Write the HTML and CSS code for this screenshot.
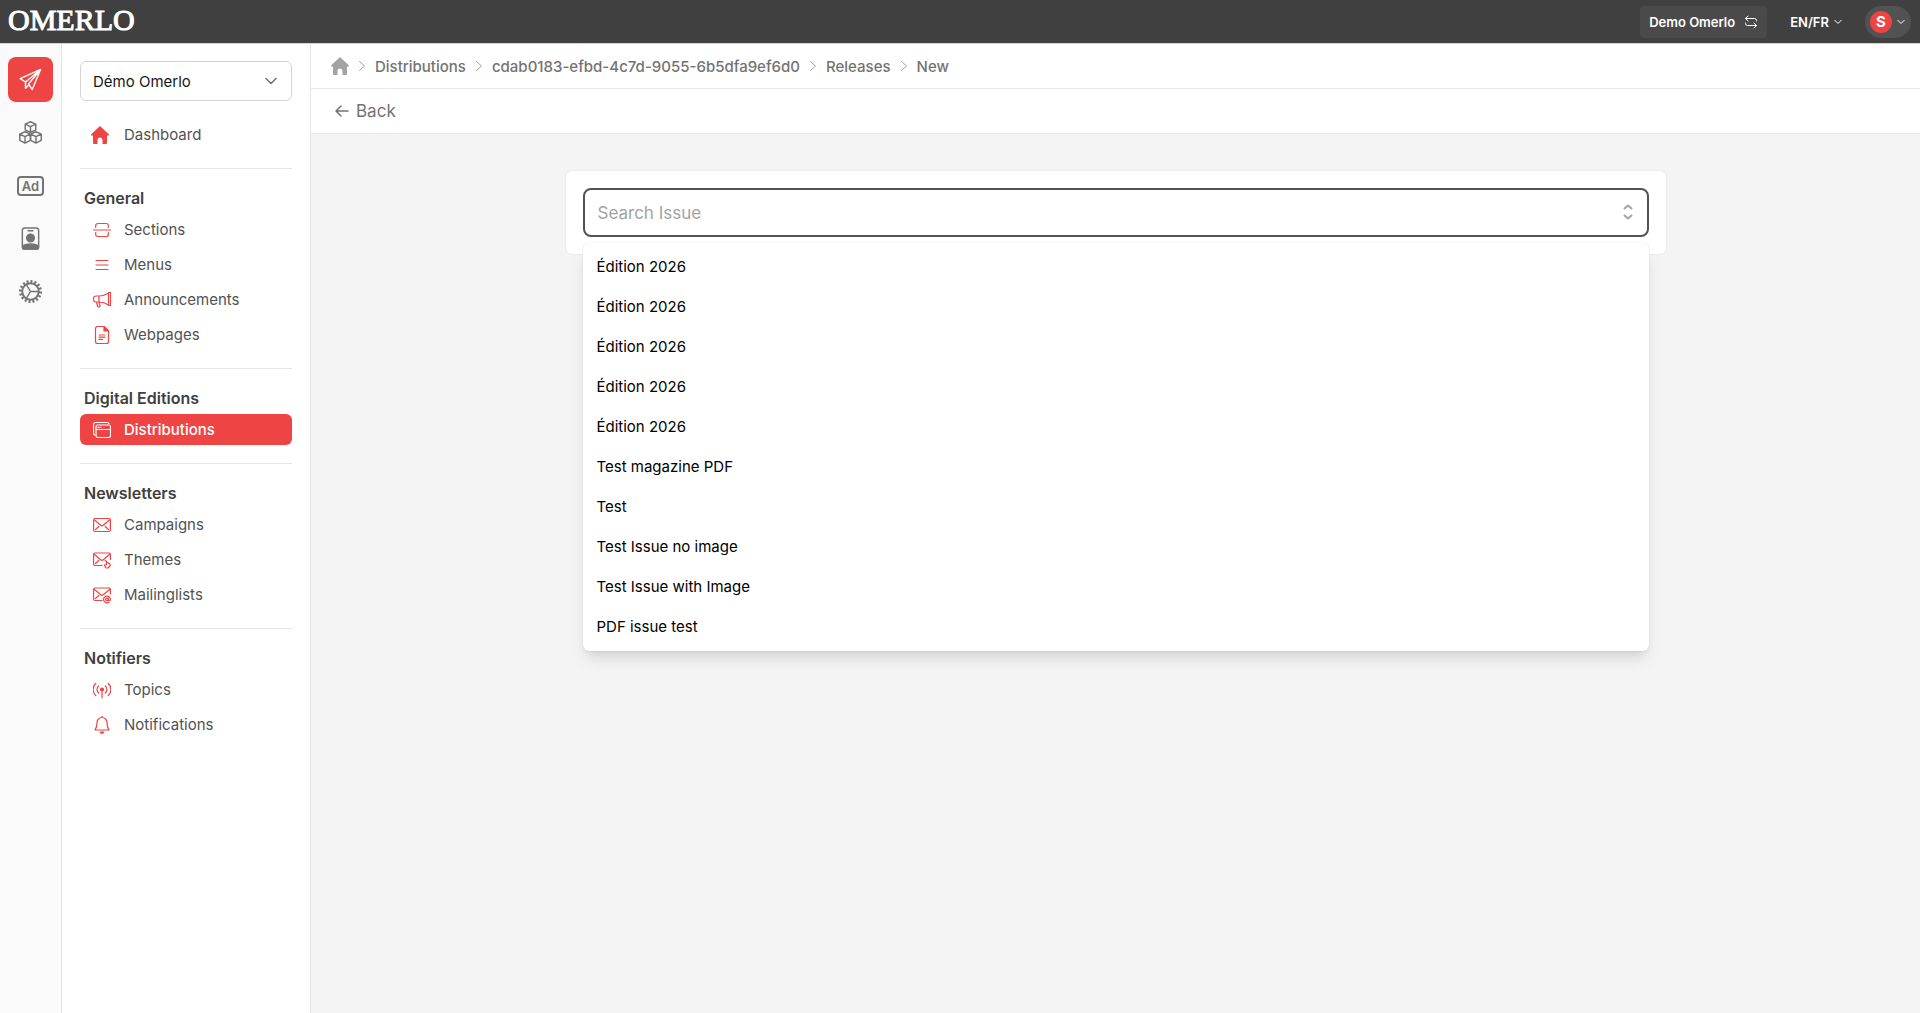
FILE: index.html
```html
<!DOCTYPE html>
<html lang="en">
<head>
    <meta charset="UTF-8">
    <meta name="viewport" content="width=device-width, initial-scale=1.0">
    <title>New release - Omerlo</title>
    <link rel="stylesheet" href="styles.css">
</head>
<body>
    <header class="topbar">
        <a href="#" class="logo">OMERLO</a>
        <div class="topbar-actions">
            <button type="button" class="org-switch">
                Demo Omerlo
                <svg class="icon-swap" viewBox="0 0 14 14"><path d="M4 1 1.500 3.500 4 6M1.500 3.500h9a2 2 0 0 1 2 2v.5M10 8l2.500 2.500L10 13M12.500 10.500h-9a2 2 0 0 1-2-2V8"/></svg>
            </button>
            <button type="button" class="lang-switch">
                EN/FR
                <svg class="icon-caret" viewBox="0 0 8 8"><path d="M.8 2.300 4 5.500l3.200-3.200"/></svg>
            </button>
            <button type="button" class="user-menu" aria-label="User menu">
                <span class="avatar">S</span>
                <svg class="icon-caret" viewBox="0 0 8 8"><path d="M.8 2.300 4 5.500l3.200-3.200"/></svg>
            </button>
        </div>
    </header>

    <div class="layout">
        <!-- Main modules -->
        <nav class="rail" aria-label="Modules">
            <a href="#" class="rail-link active" aria-label="Publishing">
                <svg viewBox="0 0 24 24"><path d="M22.500 1.500 1.200 11l5.600 3.600zM22.500 1.500 6.800 14.600v6.600l4-4M22.500 1.500l-8.700 21-3.900-5.800z"/></svg>
            </a>
            <a href="#" class="rail-link" aria-label="Contents">
                <svg viewBox="0 0 24 24"><path d="M12 .8 17.500 3.300v5.900L12 11.800 6.500 9.200V3.300zM6.500 3.300 12 5.800l5.500-2.500M12 5.800v6M6.300 11.200l5.500 2.500v6.500l-5.500 2.900-5.500-2.900v-6.500zM.8 13.700l5.500 2.600 5.500-2.600M6.300 16.300V23M17.700 11.200l5.500 2.500v6.500l-5.500 2.900-5.500-2.900v-6.500zM12.200 13.700l5.500 2.600 5.500-2.600M17.700 16.300V23"/></svg>
            </a>
            <a href="#" class="rail-link" aria-label="Advertising">
                <span class="ad-badge">Ad</span>
            </a>
            <a href="#" class="rail-link" aria-label="Users">
                <svg viewBox="0 0 24 24"><rect x="3.500" y="1" width="17" height="22" rx="2.500"/><path d="M9.500 4h5"/><circle class="solid" cx="12" cy="11.500" r="4"/><path class="solid" d="M3.700 19.800C8 17 16 17 20.300 19.800V21a2 2 0 0 1-2 2H5.700a2 2 0 0 1-2-2z"/></svg>
            </a>
            <a href="#" class="rail-link" aria-label="Settings">
                <svg viewBox="0 0 24 24"><circle class="thick" cx="12" cy="12" r="8.600"/><circle class="teeth" cx="12" cy="12" r="10.500" pathLength="64"/><path d="m7.500 4.500 4.500 7.500-4.500 7.500M12 12h8.500"/></svg>
            </a>
        </nav>

        <aside class="sidebar">
            <select class="site-select" aria-label="Site">
                <option>Démo Omerlo</option>
            </select>

            <a href="#" class="nav-link dashboard">
                <svg viewBox="0 0 18 18"><path d="M9 0 0 8.500v1h2V17a1 1 0 0 0 1 1h3.500v-4a2.500 2.500 0 0 1 5 0v4H15a1 1 0 0 0 1-1V9.500h2v-1z"/></svg>
                Dashboard
            </a>

            <section class="nav-group">
                <h2>General</h2>
                <a href="#" class="nav-link">
                    <svg viewBox="0 0 18 18"><path d="M.5 9h17M2.700 6.400V4.500a2 2 0 0 1 2-2h8.600a2 2 0 0 1 2 2v1.900M2.700 11.500v2a2 2 0 0 0 2 2h8.600a2 2 0 0 0 2-2v-2"/></svg>
                    Sections
                </a>
                <a href="#" class="nav-link">
                    <svg viewBox="0 0 18 18"><path d="M3 4.500h12M3 9h12M3 13.500h12"/></svg>
                    Menus
                </a>
                <a href="#" class="nav-link">
                    <svg viewBox="0 0 18 18"><path d="M6 5H3a2.500 2.500 0 0 0-2.500 2.500v1A2.500 2.500 0 0 0 3 11h3c4 0 7 1.300 9.500 3V2C13 3.700 10 5 6 5zM6 5v6M15.500 1.500h2v13h-2zM3.500 11l1 4a1 1 0 0 0 1 .9h.7a.8.8 0 0 0 .8-1L6 11"/></svg>
                    Announcements
                </a>
                <a href="#" class="nav-link">
                    <svg viewBox="0 0 18 18"><path d="M11 .5H4.500a2 2 0 0 0-2 2v13a2 2 0 0 0 2 2h9a2 2 0 0 0 2-2V5zM6 9h6M6 11.200h6M6 13.400h3.500"/><path class="solid" d="M11 .5V5h4.500z"/></svg>
                    Webpages
                </a>
            </section>

            <section class="nav-group">
                <h2>Digital Editions</h2>
                <a href="#" class="nav-link active" aria-current="page">
                    <svg viewBox="0 0 18 18"><rect x="3" y="4" width="14.500" height="12.500" rx="2"/><path d="M3 8.500h14.500M1.800 14A2 2 0 0 1 .5 12.100V3.500a2 2 0 0 1 2-2h11.600A2 2 0 0 1 16 2.700M5 6.300h1M7 6.300h1"/></svg>
                    Distributions
                </a>
            </section>

            <section class="nav-group">
                <h2>Newsletters</h2>
                <a href="#" class="nav-link">
                    <svg viewBox="0 0 18 18"><rect x=".6" y="2.500" width="16.800" height="13" rx="1.500"/><path d="m1.500 4 6.200 5.200a2 2 0 0 0 2.600 0L16.500 4M2.500 13.500l3.300-3M15.500 13.500l-3.300-3"/></svg>
                    Campaigns
                </a>
                <a href="#" class="nav-link">
                    <svg viewBox="0 0 18 18"><path d="M9 14.500H2A1.500 1.500 0 0 1 .6 13V3.500A1.500 1.500 0 0 1 2 2h14a1.500 1.500 0 0 1 1.400 1.500v5M1.500 3.500l6.200 5.200a2 2 0 0 0 2.600 0l6.200-5.200M2.500 12.500l3.300-3M12.300 9.500l1.200 1v3M13.500 11l3.500 2v2l-2 2h-2l-1.800-3 1.300-.2"/></svg>
                    Themes
                </a>
                <a href="#" class="nav-link">
                    <svg viewBox="0 0 18 18"><path d="M9 14.500H2A1.500 1.500 0 0 1 .6 13V3.500A1.500 1.500 0 0 1 2 2h14a1.500 1.500 0 0 1 1.400 1.500V8M1.500 3.500l6.200 5.200a2 2 0 0 0 2.600 0l6.200-5.200M2.500 12.500l3.300-3"/><circle cx="14" cy="13.500" r="1.400"/><path d="M15.400 12.300v1.500c0 1.200 2 1.200 2-.3a3.400 3.400 0 1 0-1.700 2.900"/></svg>
                    Mailinglists
                </a>
            </section>

            <section class="nav-group">
                <h2>Notifiers</h2>
                <a href="#" class="nav-link">
                    <svg viewBox="0 0 18 18"><circle class="solid" cx="9" cy="8.500" r="1.500"/><path d="M9 9v8M5.700 12a4.500 4.500 0 0 1 0-7M12.300 12a4.500 4.500 0 0 0 0-7M2.800 14.500a8 8 0 0 1 0-12M15.200 14.500a8 8 0 0 0 0-12"/></svg>
                    Topics
                </a>
                <a href="#" class="nav-link">
                    <svg viewBox="0 0 18 18"><path d="M9 1.500A5 5 0 0 1 14 6.500c0 5 1.300 6.500 2 7.500H2c.7-1 2-2.500 2-7.500a5 5 0 0 1 5-5zM9 .3v1.200"/><path class="solid" d="M7.300 16h3.400a1.800 1.800 0 0 1-3.400 0z"/></svg>
                    Notifications
                </a>
            </section>
        </aside>

        <main class="content">
            <nav class="breadcrumb" aria-label="Breadcrumb">
                <a href="#" class="home" aria-label="Home">
                    <svg viewBox="0 0 18 18"><path d="M9 0 0 8.500v1h2V17a1 1 0 0 0 1 1h3.500v-4a2.500 2.500 0 0 1 5 0v4H15a1 1 0 0 0 1-1V9.500h2v-1z"/></svg>
                </a>
                <svg class="sep" viewBox="0 0 6 10"><path d="m.5.5 5 4.500-5 4.500"/></svg>
                <a href="#">Distributions</a>
                <svg class="sep" viewBox="0 0 6 10"><path d="m.5.5 5 4.500-5 4.500"/></svg>
                <a href="#">cdab0183-efbd-4c7d-9055-6b5dfa9ef6d0</a>
                <svg class="sep" viewBox="0 0 6 10"><path d="m.5.5 5 4.500-5 4.500"/></svg>
                <a href="#">Releases</a>
                <svg class="sep" viewBox="0 0 6 10"><path d="m.5.5 5 4.500-5 4.500"/></svg>
                <a href="#">New</a>
            </nav>
            <div class="toolbar">
                <a href="#" class="back">
                    <svg viewBox="0 0 14 12"><path d="M13 6H1M6 1 1 6l5 5"/></svg>
                    Back
                </a>
            </div>

            <div class="page">
                <div class="card">
                    <div class="combobox">
                        <input type="text" id="issue" placeholder="Search Issue" aria-label="Search Issue" role="combobox" aria-expanded="true" aria-controls="issueList" autocomplete="off">
                        <svg class="icon-sort" viewBox="0 0 10 16"><path d="m1.500 4.500 3.500-3 3.500 3M1.500 11.500l3.500 3 3.500-3"/></svg>
                        <ul class="options" id="issueList" role="listbox">
                            <li role="option">Édition 2026</li>
                            <li role="option">Édition 2026</li>
                            <li role="option">Édition 2026</li>
                            <li role="option">Édition 2026</li>
                            <li role="option">Édition 2026</li>
                            <li role="option">Test magazine PDF</li>
                            <li role="option">Test</li>
                            <li role="option">Test Issue no image</li>
                            <li role="option">Test Issue with Image</li>
                            <li role="option">PDF issue test</li>
                        </ul>
                    </div>
                </div>
            </div>
        </main>
    </div>
</body>
</html>
```

FILE: styles.css
```css
* {
    box-sizing: border-box;
}
body {
    margin: 0;
    min-height: 100vh;
    display: flex;
    flex-direction: column;
    font-family: Inter, "Liberation Sans", sans-serif;
    font-size: 16px;
    color: #525252;
    background-color: #f4f4f4;
}
a {
    color: inherit;
    text-decoration: none;
}
button, input, select {
    font-family: inherit;
}
svg {
    fill: none;
    stroke: currentColor;
    stroke-linecap: round;
    stroke-linejoin: round;
    flex-shrink: 0;
}
.solid {
    fill: currentColor;
}

/* Top bar */
.topbar {
    display: flex;
    align-items: center;
    justify-content: space-between;
    height: 44px;
    padding: 0 9px 0 8px;
    border-bottom: 1px solid #d4d4d4;
    background-color: #404040;
    color: #fff;
}
.logo {
    padding-bottom: 3px;
    font-family: "Liberation Serif", serif;
    font-size: 30px;
    line-height: 40px;
    -webkit-text-stroke: 1px #fff;
}
.topbar-actions {
    display: flex;
    align-items: center;
    gap: 23px;
}
.topbar button {
    display: flex;
    align-items: center;
    padding: 0;
    border: none;
    background: none;
    color: #fff;
    font-size: 13px;
    font-weight: 600;
    cursor: pointer;
}
.topbar .org-switch {
    height: 32px;
    gap: 9px;
    padding: 0 9px;
    border-radius: 4px;
    background-color: #4a4a4a;
}
.icon-swap {
    width: 14px;
    height: 14px;
}
.topbar .lang-switch {
    gap: 5px;
}
.icon-caret {
    width: 8px;
    height: 8px;
}
.topbar .user-menu {
    height: 32px;
    gap: 5px;
    padding: 0 6px 0 5px;
    border-radius: 16px;
    background-color: #525252;
}
.avatar {
    width: 22px;
    height: 22px;
    border-radius: 50%;
    background-color: #ef4444;
    font-size: 15px;
    line-height: 22px;
    font-weight: 700;
}

.layout {
    display: flex;
    flex: 1;
}

/* Module rail */
.rail {
    display: flex;
    flex-direction: column;
    flex-shrink: 0;
    gap: 8px;
    padding: 13px 8px;
    background-color: #fafafa;
    border-right: 1px solid #e5e5e5;
}
.rail-link {
    display: flex;
    align-items: center;
    justify-content: center;
    width: 45px;
    height: 45px;
    border-radius: 8px;
    color: #737373;
}
.rail-link svg {
    width: 23px;
    height: 23px;
    stroke-width: 1.5;
}
.rail-link.active {
    background-color: #ef4444;
    color: #fff;
}
.rail-link .thick {
    stroke-width: 2;
}
.rail-link .teeth {
    stroke-width: 3;
    stroke-linecap: butt;
    stroke-dasharray: 2 2;
}
.ad-badge {
    width: 27px;
    height: 20px;
    border: 2px solid #737373;
    border-radius: 4px;
    line-height: 16px;
    text-align: center;
    font-size: 13px;
    font-weight: 600;
}

/* Sidebar */
.sidebar {
    width: 249px;
    flex-shrink: 0;
    padding: 17px 18px;
    background-color: #fff;
    border-right: 1px solid #e5e5e5;
}
.site-select {
    display: block;
    width: 100%;
    height: 40px;
    margin-bottom: 18px;
    padding: 0 12px;
    appearance: none;
    border: 1px solid #d4d4d4;
    border-radius: 6px;
    background: #fff url("data:image/svg+xml,%3Csvg xmlns='http://www.w3.org/2000/svg' viewBox='0 0 12 8' fill='none' stroke='%236b7280' stroke-width='1.5' stroke-linecap='round' stroke-linejoin='round'%3E%3Cpath d='M1 1.5l5 5 5-5'/%3E%3C/svg%3E") no-repeat right 14px center / 12px 8px;
    color: #171717;
    font-size: 15px;
}
.nav-link {
    display: flex;
    align-items: center;
    gap: 13px;
    height: 31px;
    padding: 0 13px;
    border-radius: 6px;
    font-size: 15px;
}
.nav-link svg {
    width: 18px;
    height: 18px;
    color: #ef4444;
    stroke-width: 1.2;
}
.nav-link + .nav-link {
    margin-top: 4px;
}
.nav-link.active {
    background-color: #ef4444;
    color: #fff;
    font-weight: 500;
}
.nav-link.active svg {
    color: #fff;
}
.dashboard {
    gap: 15px;
    padding: 0 11px;
}
.dashboard svg, .home svg {
    fill: currentColor;
    stroke: none;
}
.nav-group {
    margin-top: 18px;
    padding-top: 18px;
    border-top: 1px solid #e5e5e5;
}
.nav-group h2 {
    margin: 0 0 5px;
    padding-left: 4px;
    font-size: 16px;
    line-height: 22px;
    font-weight: 600;
    color: #404040;
}

/* Content */
.content {
    flex: 1;
    min-width: 0;
}
.breadcrumb, .toolbar {
    display: flex;
    align-items: center;
    height: 45px;
    padding: 0 20px;
    background-color: #fff;
    border-bottom: 1px solid #ebebeb;
    color: #737373;
}
.breadcrumb {
    gap: 10px;
    font-size: 15px;
    font-weight: 500;
}
.home {
    display: flex;
    color: #a3a3a3;
}
.home svg {
    width: 18px;
    height: 18px;
}
.sep {
    width: 6px;
    height: 10px;
    color: #a3a3a3;
}
.toolbar {
    padding: 0 24px;
}
.back {
    display: flex;
    align-items: center;
    gap: 7px;
    font-size: 17px;
}
.back svg {
    width: 14px;
    height: 12px;
    stroke-width: 1.5;
}
.page {
    padding: 37px 24px;
}
.card {
    max-width: 1100px;
    margin: 0 auto;
    padding: 17px;
    border-radius: 6px;
    background-color: #fff;
    box-shadow: 0 0 2px rgba(0, 0, 0, 0.1);
}
.combobox {
    position: relative;
}
.combobox input {
    display: block;
    width: 100%;
    height: 49px;
    padding: 0 40px 0 13px;
    border: 2px solid #525252;
    border-radius: 8px;
    outline: none;
    background-color: #fff;
    font-size: 17px;
}
.combobox input::placeholder {
    color: #a3a3a3;
}
.icon-sort {
    position: absolute;
    top: 16px;
    right: 16px;
    width: 10px;
    height: 16px;
    color: #a3a3a3;
    stroke-width: 2;
}
.options {
    position: absolute;
    top: 55px;
    left: 0;
    right: 0;
    margin: 0;
    padding: 4px 0;
    list-style: none;
    border-radius: 6px;
    background-color: #fff;
    box-shadow: 0 0 1px rgba(0, 0, 0, 0.2), 0 10px 16px -3px rgba(0, 0, 0, 0.12), 0 4px 6px -4px rgba(0, 0, 0, 0.1);
    color: #000;
    font-size: 15px;
}
.options li {
    padding: 0 14px;
    line-height: 40px;
    cursor: pointer;
}
```
